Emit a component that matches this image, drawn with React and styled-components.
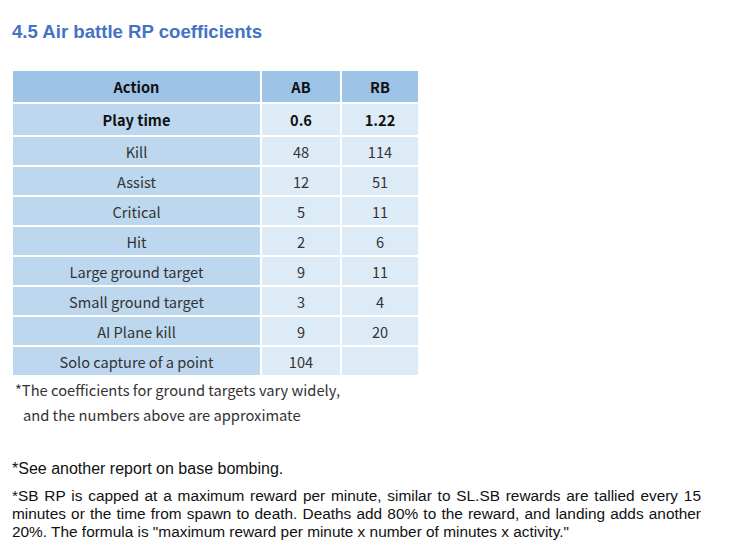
import React from 'react';
import styled, {createGlobalStyle} from 'styled-components';

const GlobalStyle = createGlobalStyle`
  body {
    margin: 0;
    background: #ffffff;
  }
`

const Page = styled.div`
  width: 729px;
  height: 551px;
  padding: 21px 28px 0 12px;
  box-sizing: border-box;
  overflow: hidden;
`

const Title = styled.h2`
  margin: 0 0 27px 0;
  font-family: "Liberation Sans", Arial, sans-serif;
  font-size: 18.6px;
  font-weight: bold;
  color: #4472c4;
  line-height: 22px;
`

const Table = styled.table`
  border-collapse: separate;
  border-spacing: 2px;
  margin-left: -1px;
  margin-top: -1px;
  font-family: "Noto Sans CJK JP", "Noto Sans", sans-serif;
  font-size: 14.6px;
  color: #222;
`

const Cell = styled.td`
  padding: 0;
  text-align: center;
  height: ${p => (p.$tall ? 31 : 28)}px;
  font-weight: ${p => (p.$bold ? 'bold' : 'normal')};
  background: ${p => (p.$head ? '#9dc3e6' : p.$label ? '#bdd7ee' : '#ddebf7')};
  width: ${p => p.$w}px;
  color: ${p => (p.$bold ? '#111' : '#333')};
`

const Note = styled.div`
  font-family: "Noto Sans CJK JP", "Noto Sans", sans-serif;
  font-size: 14.7px;
  color: #333;
  line-height: 25px;
  margin: 0 0 0 3px;
`

const NoteIndent = styled.div`
  padding-left: 8px;
`

const Para = styled.p`
  font-family: "Liberation Sans", Arial, sans-serif;
  font-size: ${p => p.$size}px;
  color: #111;
  line-height: 18px;
  margin: ${p => p.$top}px 0 0 0;
`

const Line = styled.span`
  display: block;
  text-align: justify;
  text-align-last: ${p => (p.$last ? 'left' : 'justify')};
`

const rows = [
  ['Kill', '48', '114'],
  ['Assist', '12', '51'],
  ['Critical', '5', '11'],
  ['Hit', '2', '6'],
  ['Large ground target', '9', '11'],
  ['Small ground target', '3', '4'],
  ['AI Plane kill', '9', '20'],
  ['Solo capture of a point', '104', ''],
];

const App = () => {
  return (
    <Page>
      <GlobalStyle/>
      <Title>4.5 Air battle RP coefficients</Title>
      <Table>
        <tbody>
          <tr>
            <Cell $head $bold $tall $w={247}>Action</Cell>
            <Cell $head $bold $tall $w={78}>AB</Cell>
            <Cell $head $bold $tall $w={76}>RB</Cell>
          </tr>
          <tr>
            <Cell $label $bold $tall>Play time</Cell>
            <Cell $bold $tall>0.6</Cell>
            <Cell $bold $tall>1.22</Cell>
          </tr>
          {rows.map(([name, ab, rb]) => (
            <tr key={name}>
              <Cell $label>{name}</Cell>
              <Cell>{ab}</Cell>
              <Cell>{rb}</Cell>
            </tr>
          ))}
        </tbody>
      </Table>
      <Note>
        <div>*The coefficients for ground targets vary widely,</div>
        <NoteIndent>and the numbers above are approximate</NoteIndent>
      </Note>
      <Para $top={33} $size={16}>*See another report on base bombing.</Para>
      <Para $top={9} $size={15.4}>
        <Line>*SB RP is capped at a maximum reward per minute, similar to SL.SB rewards are tallied every 15</Line>
        <Line>minutes or the time from spawn to death. Deaths add 80% to the reward, and landing adds another</Line>
        <Line $last>20%. The formula is "maximum reward per minute x number of minutes x activity."</Line>
      </Para>
    </Page>
  );
};

export default App;
